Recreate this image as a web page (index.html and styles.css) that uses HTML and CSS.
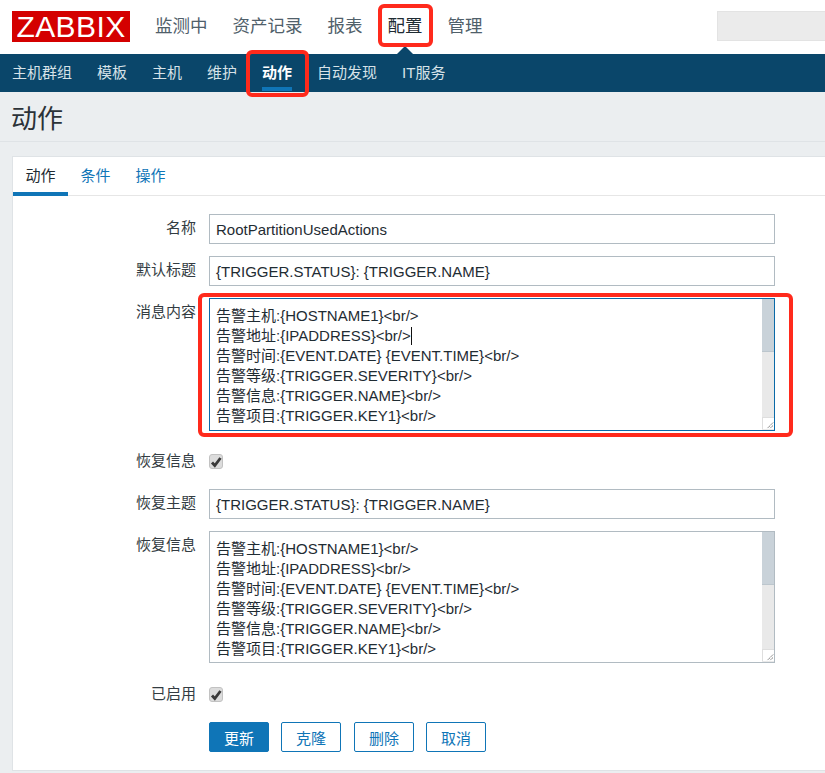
FILE: index.html
```html
<!DOCTYPE html>
<html lang="zh-CN">
<head>
<meta charset="utf-8">
<title>动作</title>
<link rel="stylesheet" href="styles.css">
</head>
<body>
<header class="top">
  <div class="logo">ZABBIX</div>
  <nav class="main-nav">
    <a>监测中</a><a>资产记录</a><a>报表</a><a class="current">配置</a><a>管理</a>
  </nav>
  <div class="search"></div>
</header>
<nav class="sub-nav">
  <a>主机群组</a><a>模板</a><a>主机</a><a>维护</a><a class="current">动作</a><a>自动发现</a><a>IT服务</a>
</nav>
<main class="page">
  <h1 class="title">动作</h1>
  <section class="card">
    <div class="tabs">
      <a class="tab active">动作</a><a class="tab">条件</a><a class="tab">操作</a>
    </div>
    <form class="form">
      <label class="label">名称</label>
      <div class="input">RootPartitionUsedActions</div>
      <label class="label">默认标题</label>
      <div class="input">{TRIGGER.STATUS}: {TRIGGER.NAME}</div>
      <label class="label">消息内容</label>
      <div class="area focus">
        <div class="lines">告警主机:{HOSTNAME1}&lt;br/&gt;<br>告警地址:{IPADDRESS}&lt;br/&gt;<span class="caret"></span><br>告警时间:{EVENT.DATE} {EVENT.TIME}&lt;br/&gt;<br>告警等级:{TRIGGER.SEVERITY}&lt;br/&gt;<br>告警信息:{TRIGGER.NAME}&lt;br/&gt;<br>告警项目:{TRIGGER.KEY1}&lt;br/&gt;</div>
        <div class="bar"><div class="thumb"></div></div>
        <svg class="grip" width="12" height="12" viewBox="0 0 12 12"><path d="M5 11 11 5M8 11 11 8" stroke="#555" stroke-width="1" stroke-dasharray="1 .5" fill="none"/></svg>
      </div>
      <label class="label check-label">恢复信息</label>
      <div class="check-cell"><span class="check"><svg width="12" height="12" viewBox="0 0 12 12"><path d="M2 6.5 4.8 9.5 10.5 2" stroke="#3a3a3a" stroke-width="2.8" fill="none"/></svg></span></div>
      <label class="label">恢复主题</label>
      <div class="input">{TRIGGER.STATUS}: {TRIGGER.NAME}</div>
      <label class="label">恢复信息</label>
      <div class="area short">
        <div class="lines">告警主机:{HOSTNAME1}&lt;br/&gt;<br>告警地址:{IPADDRESS}&lt;br/&gt;<br>告警时间:{EVENT.DATE} {EVENT.TIME}&lt;br/&gt;<br>告警等级:{TRIGGER.SEVERITY}&lt;br/&gt;<br>告警信息:{TRIGGER.NAME}&lt;br/&gt;<br>告警项目:{TRIGGER.KEY1}&lt;br/&gt;</div>
        <div class="bar"><div class="thumb"></div></div>
        <svg class="grip" width="12" height="12" viewBox="0 0 12 12"><path d="M5 11 11 5M8 11 11 8" stroke="#555" stroke-width="1" stroke-dasharray="1 .5" fill="none"/></svg>
      </div>
      <label class="label check-label">已启用</label>
      <div class="check-cell"><span class="check"><svg width="12" height="12" viewBox="0 0 12 12"><path d="M2 6.5 4.8 9.5 10.5 2" stroke="#3a3a3a" stroke-width="2.8" fill="none"/></svg></span></div>
      <div class="actions">
        <button type="button" class="btn primary">更新</button>
        <button type="button" class="btn">克隆</button>
        <button type="button" class="btn">删除</button>
        <button type="button" class="btn">取消</button>
      </div>
    </form>
  </section>
</main>
<div class="mark mark-config"></div>
<div class="mark mark-action"></div>
<div class="mark mark-message"></div>
</body>
</html>
```

FILE: styles.css
```css
* { box-sizing: border-box; }
html, body { margin: 0; height: 773px; overflow: hidden; }
body {
  position: relative;
  width: 825px;
  background: #ebeef0;
  color: #1f2c33;
  font-family: "Liberation Sans", "Noto Sans CJK SC", sans-serif;
  font-size: 15px;
}
.top {
  height: 54px;
  background: #fff;
  display: flex;
  align-items: flex-start;
  padding: 11px 0 0 12px;
}
.logo {
  width: 118px;
  height: 31px;
  background: #d40000;
  color: #fff;
  font-size: 30px;
  line-height: 32px;
  text-align: center;
  letter-spacing: 0.4px;
}
.main-nav {
  display: flex;
  gap: 25px;
  margin-left: 25px;
  font-size: 17.5px;
  line-height: 30px;
  color: #50606a;
}
.main-nav .current { color: #1f2c33; position: relative; }
.main-nav .current::after {
  content: "";
  position: absolute;
  left: 9px;
  top: 35px;
  border: 8px solid transparent;
  border-top: 0;
  border-bottom-color: #0a466a;
}
.search {
  width: 108px;
  height: 30px;
  margin-left: auto;
  background: #ebebeb;
  border: 1px solid #e3e3e3;
  border-right: 0;
}
.sub-nav {
  height: 38px;
  background: #0a466a;
  display: flex;
  gap: 25px;
  padding-left: 12px;
  font-size: 15px;
  line-height: 37px;
  color: #d7e2e8;
}
.sub-nav a { height: 37px; }
.sub-nav .current {
  color: #fff;
  font-weight: bold;
  border-bottom: 4px solid #0f75b7;
}
.title {
  margin: 0 0 14px;
  height: 50px;
  padding-left: 11px;
  border-bottom: 1px solid #dfe3e6;
  font-weight: normal;
  font-size: 26px;
  line-height: 55px;
  color: #2b3238;
}
.card {
  margin-left: 12px;
  height: 615px;
  background: #fff;
  border: 1px solid #dfe3e6;
  border-right: 0;
}
.tabs {
  height: 39px;
  display: flex;
  border-bottom: 1px solid #e6e6e6;
}
.tab {
  width: 55px;
  text-align: center;
  white-space: nowrap;
  line-height: 37px;
  color: #0f75b7;
  font-size: 15px;
}
.tab.active {
  height: 39px;
  color: #1f2c33;
  border-bottom: 4px solid #0f75b7;
}
.form {
  display: grid;
  grid-template-columns: 183px 566px;
  column-gap: 13px;
  row-gap: 12px;
  padding-top: 18px;
  align-items: start;
}
.label {
  text-align: right;
  line-height: 28px;
  color: #333c42;
  font-size: 15px;
}
.input {
  height: 30px;
  padding: 0 6px;
  border: 1px solid #b1bbc2;
  line-height: 29px;
  color: #1f2c33;
  font-size: 15px;
}
.area {
  position: relative;
  height: 133px;
  border: 1px solid #b1bbc2;
  overflow: hidden;
}
.area.short { height: 132px; margin-bottom: 1px; }
.area + .label { margin-top: 6px; }
.area.focus { border-color: #0a6aa8; }
.lines {
  padding: 7px 6px 0;
  line-height: 20px;
  font-size: 15px;
  color: #1f2c33;
  white-space: nowrap;
}
.caret {
  display: inline-block;
  width: 1px;
  height: 18px;
  background: #111;
  vertical-align: -4px;
}
.bar {
  position: absolute;
  top: 0;
  right: 0;
  bottom: 0;
  width: 12px;
  background: #e9e9e9;
}
.thumb {
  height: 53px;
  background: #c9d2d9;
  border-bottom: 1px solid #bcc6cd;
}
.grip {
  position: absolute;
  right: 0;
  bottom: 1px;
  background: #fff;
  border-top: 1px solid #dedede;
  border-left: 1px solid #dedede;
}
.check-label { line-height: 24px; height: 24px; }
.check-cell { height: 28px; padding-top: 5px; margin-top: 6px; }
.check {
  display: flex;
  align-items: center;
  justify-content: center;
  width: 14px;
  height: 15px;
  background: #dcdcdc;
  border: 1px solid #c2c2c2;
  border-radius: 3px;
}
.actions {
  grid-column: 2;
  display: flex;
  gap: 12px;
}
.btn {
  width: 60px;
  height: 30px;
  padding: 0;
  background: #fff;
  border: 1px solid #0f75b7;
  border-radius: 2px;
  color: #0f75b7;
  font: inherit;
  font-size: 15px;
}
.btn:nth-child(3) { margin-left: 1px; }
.btn.primary { background: #0f75b7; color: #fff; }
.mark {
  position: absolute;
  border: 4px solid #ff2a1c;
  border-radius: 6px;
}
.mark-config { left: 378px; top: 4px; width: 55px; height: 43px; }
.mark-action { left: 246px; top: 50px; width: 63px; height: 47px; }
.mark-message { left: 198px; top: 293px; width: 595px; height: 144px; }
```
